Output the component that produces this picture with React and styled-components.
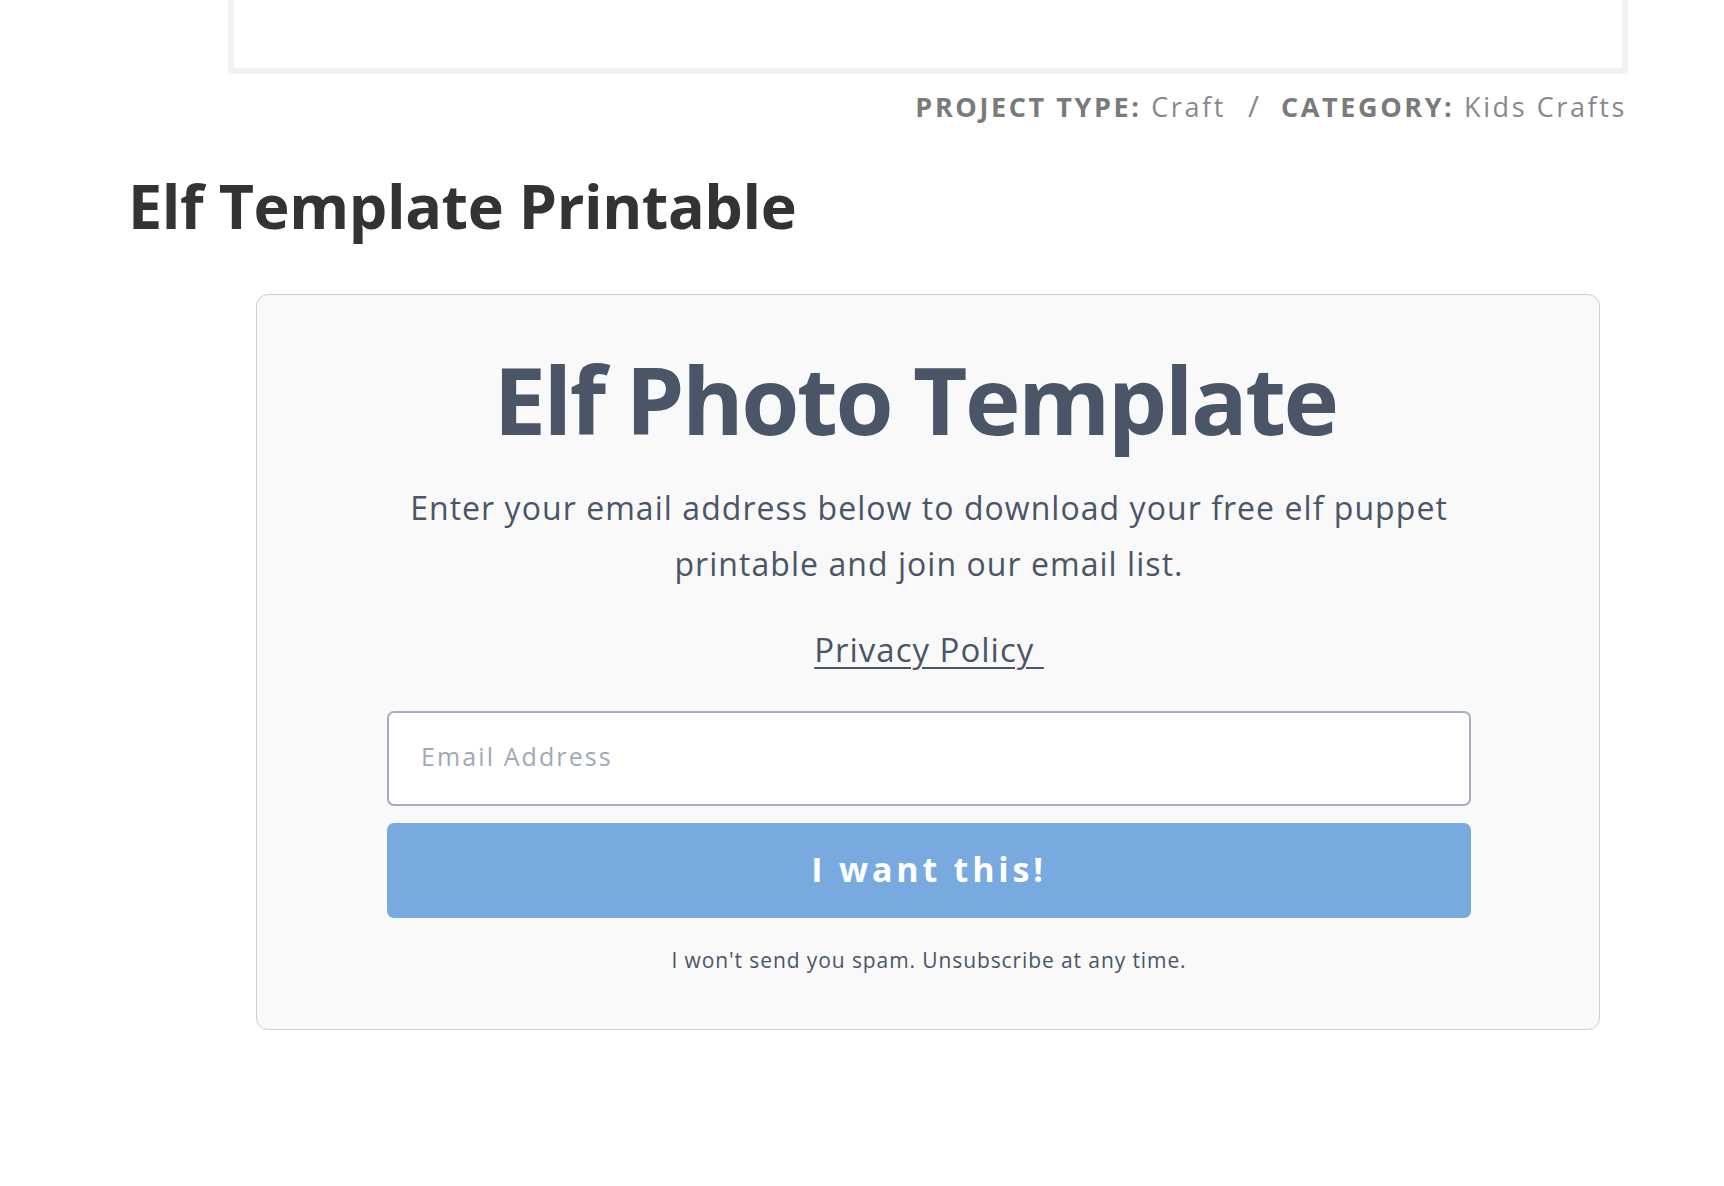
import React from "react";
import styled, { createGlobalStyle } from "styled-components";

const GlobalStyle = createGlobalStyle`
  html, body {
    margin: 0;
    padding: 0;
    background: #ffffff;
  }
  * {
    box-sizing: border-box;
  }
`;

const Page = styled.div`
  display: flex;
  flex-direction: column;
  width: 1724px;
  min-height: 1186px;
  padding: 0 96px 0 128px;
  overflow: hidden;
`;

const TopFrame = styled.div`
  height: 74px;
  margin-left: 100px;
  background: #ffffff;
  border: 6px solid #f2f2f2;
  border-top: none;
`;

const Meta = styled.div`
  display: flex;
  justify-content: flex-end;
  align-items: baseline;
  gap: 22px;
  margin-top: 11px;
  font-family: "Open Sans", sans-serif;
  font-size: 27px;
  letter-spacing: 2.6px;
  color: #888888;
  padding-right: 1px;
`;

const MetaItem = styled.span`
  white-space: nowrap;
`;

const MetaLabel = styled.b`
  font-weight: 700;
  color: #7a7a7a;
`;

const Slash = styled.span`
  color: #888888;
  font-size: 30px;
  letter-spacing: 0;
`;

const PageTitle = styled.h1`
  margin: 38px 0 0 0;
  font-family: "Open Sans", sans-serif;
  font-weight: 700;
  font-size: 61px;
  line-height: 84px;
  color: #333333;
  letter-spacing: -0.4px;
`;

const Card = styled.div`
  display: flex;
  flex-direction: column;
  align-items: center;
  width: 1344px;
  margin: 46px 0 0 128px;
  padding: 39px 128px 54px 130px;
  background: #f9f9f9;
  border: 1px solid #c6d0dc;
  border-radius: 12px;
  font-family: "Open Sans", sans-serif;
  color: #4a5568;
`;

const CardTitle = styled.h2`
  margin: 0;
  padding-right: 28px;
  font-family: "Open Sans", sans-serif;
  font-weight: 700;
  font-size: 94px;
  line-height: 130px;
  letter-spacing: -2.5px;
  color: #4a5568;
  text-align: center;
`;

const Lead = styled.p`
  margin: 16px 0 0 0;
  font-size: 32px;
  line-height: 56px;
  letter-spacing: 1.05px;
  text-align: center;
  color: #4a5568;
`;

const PolicyLink = styled.a`
  margin-top: 36px;
  font-size: 33px;
  line-height: 44px;
  letter-spacing: 1px;
  color: #4a5568;
  text-decoration: underline;
  text-underline-offset: 5px;
  text-decoration-thickness: 2px;
  white-space: pre;
`;

const Form = styled.form`
  display: flex;
  flex-direction: column;
  gap: 17px;
  width: 100%;
  margin-top: 39px;
`;

const EmailInput = styled.input`
  width: 100%;
  height: 95px;
  padding: 0 32px 5px 32px;
  background: #ffffff;
  border: 2px solid #a3afc0;
  border-radius: 7px;
  font-family: "Open Sans", sans-serif;
  font-size: 25px;
  letter-spacing: 2.1px;
  color: #4a5568;
  outline: none;

  &::placeholder {
    color: #a0a9b8;
  }
`;

const SubmitButton = styled.button`
  width: 100%;
  height: 95px;
  border: none;
  border-radius: 7px;
  background: #79aadf;
  color: #ffffff;
  font-family: "Open Sans", sans-serif;
  font-weight: 700;
  font-size: 34px;
  letter-spacing: 3.8px;
  padding-bottom: 4px;
  cursor: pointer;
`;

const Note = styled.p`
  margin: 27px 0 0 0;
  font-size: 21px;
  line-height: 30px;
  letter-spacing: 0.9px;
  text-align: center;
  color: #4a5568;
`;

const App = () => {
  return (
    <React.Fragment>
      <GlobalStyle />
      <Page>
        <TopFrame />
        <Meta>
          <MetaItem>
            <MetaLabel>PROJECT TYPE:</MetaLabel> Craft
          </MetaItem>
          <Slash>/</Slash>
          <MetaItem>
            <MetaLabel>CATEGORY:</MetaLabel> Kids Crafts
          </MetaItem>
        </Meta>
        <PageTitle>Elf Template Printable</PageTitle>
        <Card>
          <CardTitle>Elf Photo Template</CardTitle>
          <Lead>
            Enter your email address below to download your free elf puppet
            printable and join our email list.
          </Lead>
          <PolicyLink href="#">{"Privacy Policy "}</PolicyLink>
          <Form onSubmit={(e) => e.preventDefault()}>
            <EmailInput type="email" placeholder="Email Address" />
            <SubmitButton type="submit">I want this!</SubmitButton>
          </Form>
          <Note>I won't send you spam. Unsubscribe at any time.</Note>
        </Card>
      </Page>
    </React.Fragment>
  );
};

export default App;
